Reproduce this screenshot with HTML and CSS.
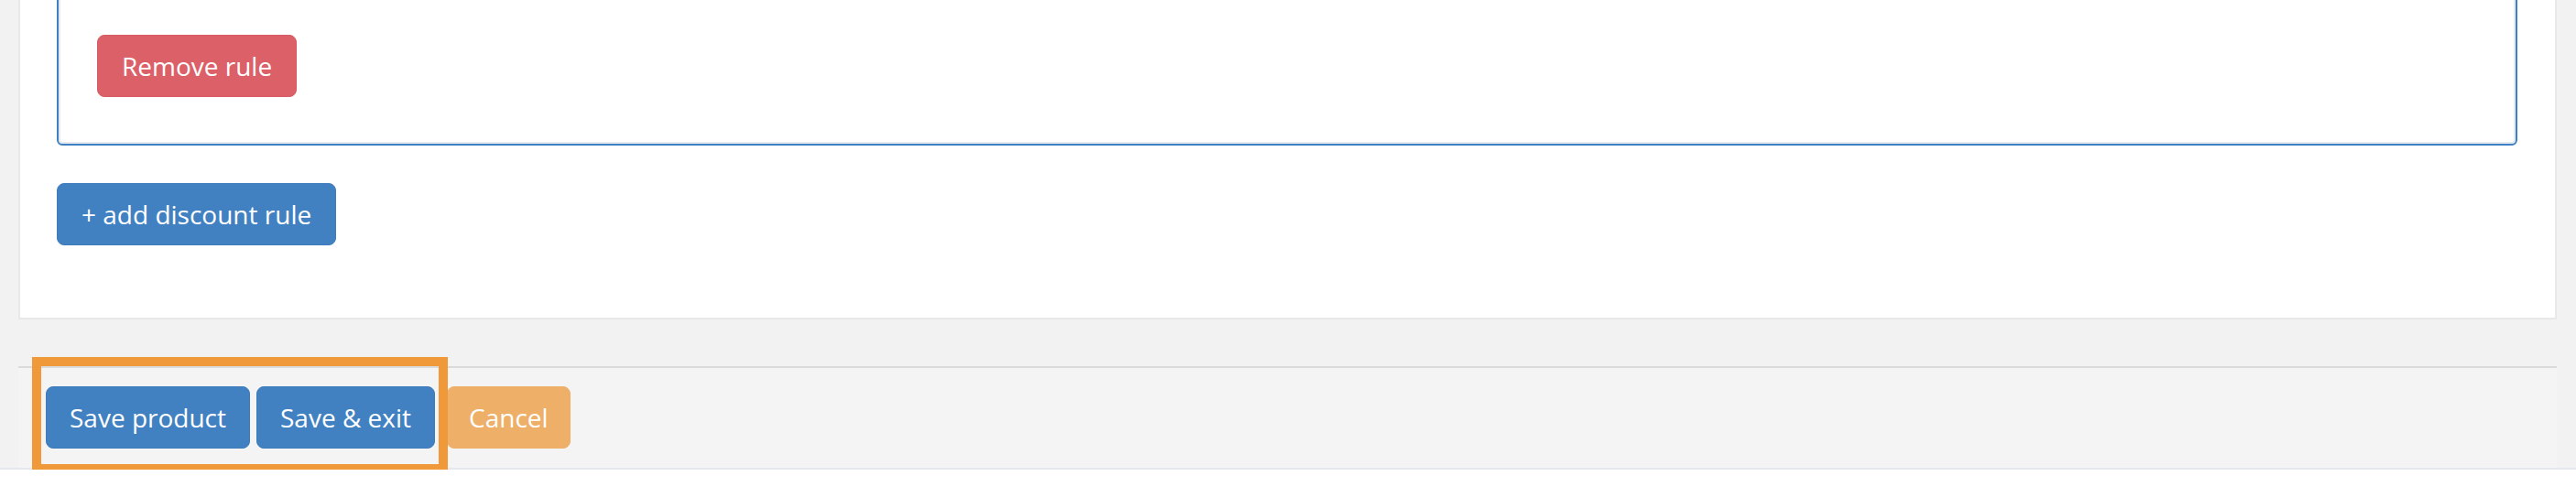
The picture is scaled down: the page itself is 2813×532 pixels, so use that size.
FILE: index.html
```html
<!DOCTYPE html>
<html lang="en">
<head>
<meta charset="utf-8">
<title>Edit product</title>
<link rel="stylesheet" href="styles.css">
</head>
<body>
<div class="page">
  <section class="panel">
    <div class="rule-box">
      <button class="btn btn-danger" type="button">Remove rule</button>
    </div>
    <button class="btn btn-primary add-rule" type="button">+ add discount rule</button>
  </section>
  <footer class="actions">
    <button class="btn btn-primary btn-save" type="button">Save product</button>
    <button class="btn btn-primary btn-exit" type="button">Save &amp; exit</button>
    <button class="btn btn-warning" type="button">Cancel</button>
    <div class="highlight"></div>
  </footer>
</div>
</body>
</html>
```
FILE: styles.css
```css
* { box-sizing: border-box; }
html, body { margin: 0; padding: 0; }
body {
  background: #ffffff;
  font-family: "Open Sans", "Liberation Sans", sans-serif;
  overflow: hidden;
}
.page {
  margin-top: -60px;
  background: #f2f2f2;
  padding: 0 21px 0 20px;
  border-bottom: 2px solid #e4e7eb;
}
.panel {
  background: #ffffff;
  border: 2px solid #e8e8e8;
  padding: 40px 41px 79px 40px;
}
.rule-box {
  border: 2px solid #3f80c3;
  border-radius: 6px;
  box-shadow: inset 0 0 0 2px #e6e9ee;
  padding: 54px 40px 51px 42px;
}
.btn {
  display: inline-block;
  font-family: "Open Sans", "Liberation Sans", sans-serif;
  font-size: 28px;
  line-height: 40px;
  padding: 13px 26px;
  border: 1px solid transparent;
  border-radius: 8px;
  color: #ffffff;
  cursor: pointer;
  margin: 0;
}
.btn-primary { background: #4181c2; border-color: #3d7bbb; }
.btn-danger { background: #dc6068; border-color: #d85a62; }
.btn-warning { background: #eeaf68; border-color: #eeaf68; }
.add-rule { margin-top: 41px; }
.actions {
  position: relative;
  margin-top: 51px;
  background: #f4f4f4;
  border-top: 2px solid #dadada;
  padding: 20px 30px 21px 30px;
  display: flex;
  align-items: center;
}
.actions .btn { padding: 13px 25px; }
.actions .btn-exit { margin-left: 7px; }
.actions .btn-warning { margin-left: 13px; padding: 13px 23px; }
.highlight {
  position: absolute;
  left: 15px;
  top: -12px;
  width: 454px;
  height: 127px;
  border: 10px solid #f0993a;
  pointer-events: none;
}
```
